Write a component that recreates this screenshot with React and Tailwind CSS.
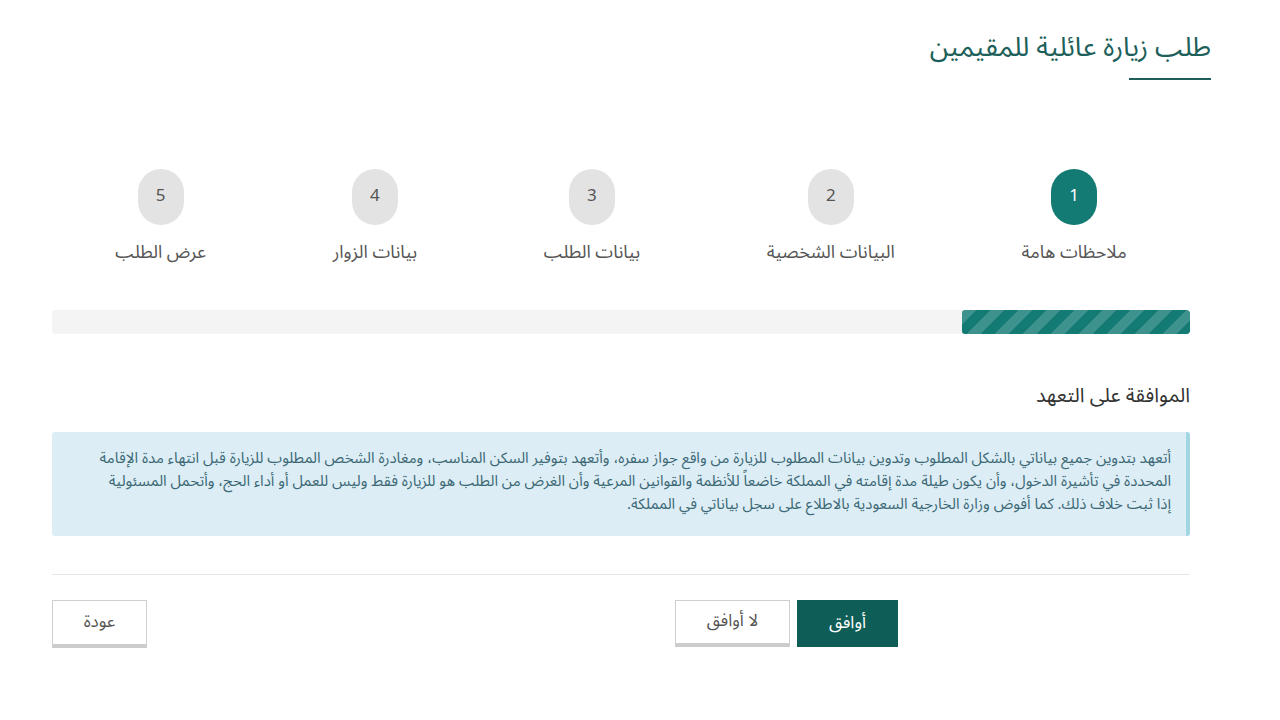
const steps = [
  { n: 1, label: "ملاحظات هامة", active: true },
  { n: 2, label: "البيانات الشخصية" },
  { n: 3, label: "بيانات الطلب" },
  { n: 4, label: "بيانات الزوار" },
  { n: 5, label: "عرض الطلب" },
];

function Step({ n, label, active }) {
  return (
    <div className="flex flex-col items-center">
      <div
        className={
          active
            ? "w-[46px] h-[56px] rounded-full bg-[#137a74] text-white flex items-center justify-center text-[17px]"
            : "w-[46px] h-[56px] rounded-full bg-[#e4e3e3] text-[#555] flex items-center justify-center text-[17px]"
        }
      >
        {n}
      </div>
      <div className="mt-[15px] text-[18px] text-[#555] leading-[24px] whitespace-nowrap">{label}</div>
    </div>
  );
}

export default function App() {
  return (
    <div
      dir="rtl"
      className="w-[1280px] h-[720px] bg-white overflow-hidden font-['Noto_Sans_Arabic','Noto_Kufi_Arabic','DejaVu_Sans',sans-serif]"
    >
      <div className="pr-[69px] pt-[29px]">
        <h1 className="text-[27px] leading-[38px] text-[#1d5f5a] font-normal inline-block">طلب زيارة عائلية للمقيمين</h1>
        <div className="w-[82px] h-[2px] bg-[#1d5f5a] mt-[11px]"></div>
      </div>

      <div className="mr-[90px] ml-[52px]">
        <div className="flex justify-around mt-[89px]">
          {steps.map((s) => (
            <Step key={s.n} {...s} />
          ))}
        </div>

        <div className="mt-[46px] h-[24px] bg-[#f4f4f4] rounded-[3px] overflow-hidden flex">
          <div className="w-[20%] h-full bg-[#137a74] rounded-[3px] bg-[linear-gradient(135deg,rgba(255,255,255,.18)_25%,transparent_25%,transparent_50%,rgba(255,255,255,.18)_50%,rgba(255,255,255,.18)_75%,transparent_75%,transparent)] bg-[length:28px_28px]"></div>
        </div>

        <h2 className="mt-[48px] text-[20px] leading-[28px] text-[#333] font-normal">الموافقة على التعهد</h2>

        <div className="mt-[22px] h-[104px] bg-[#dcedf6] border-r-[4px] border-[#a3d6e3] rounded-[3px] pr-[15px] pl-[16px] pt-[15px] text-[15px] leading-[23px] text-[#3b6874]">
          <p className="whitespace-nowrap">
            أتعهد بتدوين جميع بياناتي بالشكل المطلوب وتدوين بيانات المطلوب للزيارة من واقع جواز سفره، وأتعهد بتوفير السكن المناسب، ومغادرة الشخص المطلوب للزيارة قبل انتهاء مدة الإقامة
            <br />
            المحددة في تأشيرة الدخول، وأن يكون طيلة مدة إقامته في المملكة خاضعاً للأنظمة والقوانين المرعية وأن الغرض من الطلب هو للزيارة فقط وليس للعمل أو أداء الحج، وأتحمل المسئولية
            <br />
            إذا ثبت خلاف ذلك. كما أفوض وزارة الخارجية السعودية بالاطلاع على سجل بياناتي في المملكة.
          </p>
        </div>

        <div className="mt-[38px] h-px bg-[#e6e6e6]"></div>

        <div className="mt-[25px] flex items-start justify-between">
          <div className="flex gap-[7px] mr-[292px]">
            <button className="w-[101px] h-[47px] bg-[#0e5d56] text-white text-[17px]">أوافق</button>
            <button className="w-[115px] h-[47px] bg-white border border-[#cfcfcf] border-b-[4px] border-b-[#cccccc] text-[#555] text-[17px]">لا أوافق</button>
          </div>
          <button className="w-[95px] h-[48px] bg-white border border-[#cfcfcf] border-b-[4px] border-b-[#cccccc] text-[#555] text-[17px]">عودة</button>
        </div>
      </div>
    </div>
  );
}
